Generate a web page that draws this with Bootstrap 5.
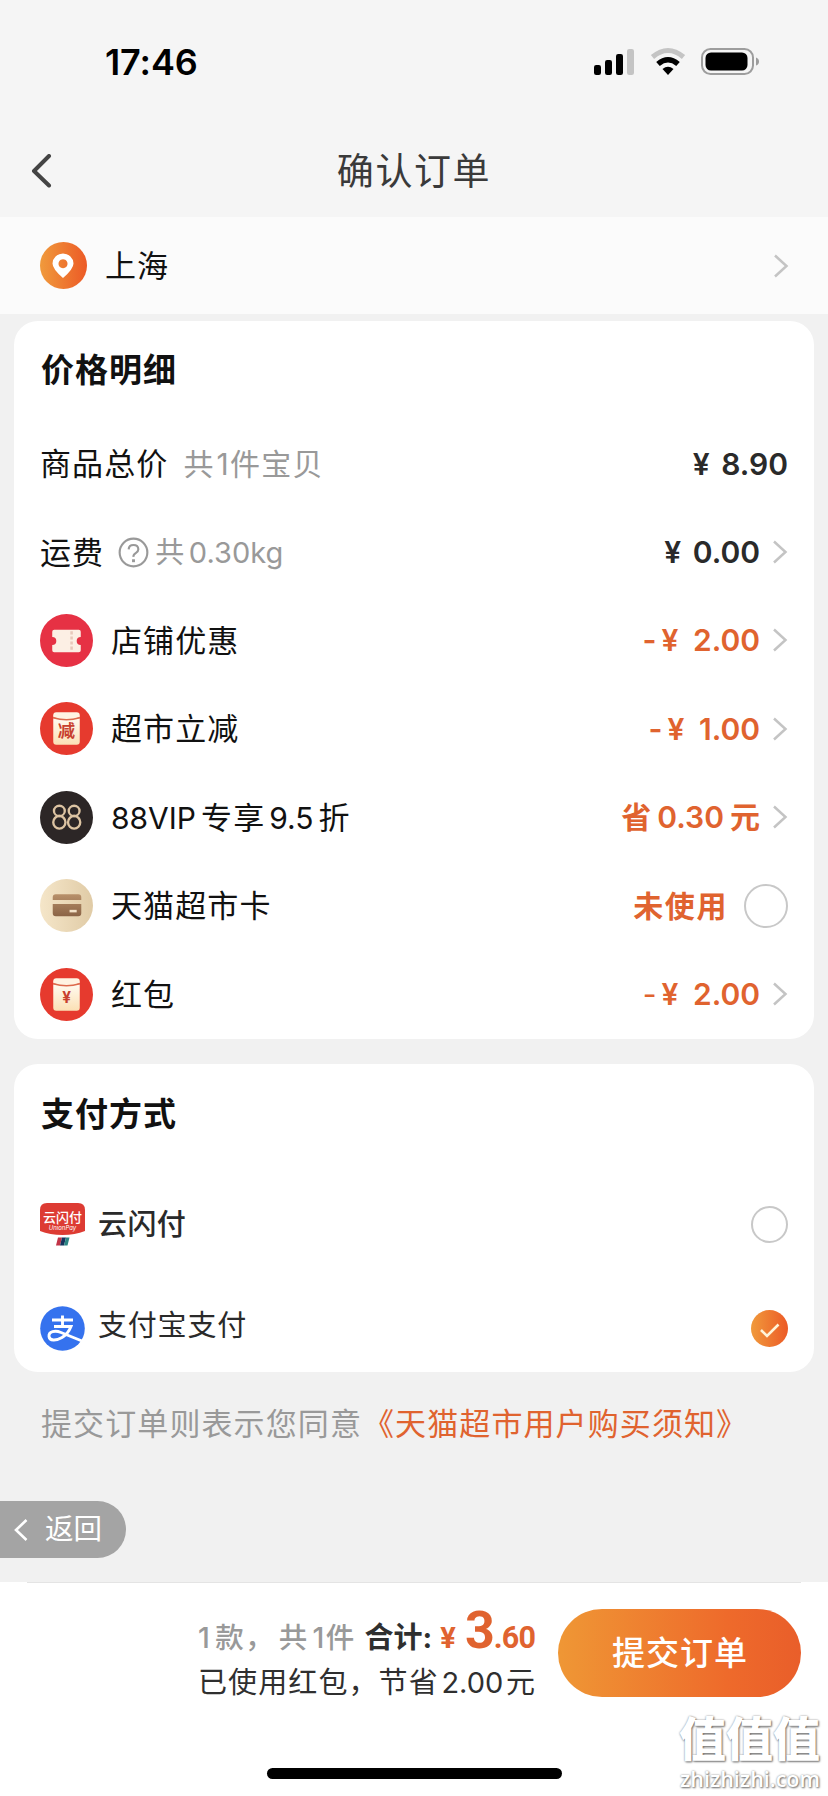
<!DOCTYPE html>
<html lang="zh-CN">
<head>
<meta charset="utf-8">
<meta name="viewport" content="width=device-width, initial-scale=1">
<title>确认订单</title>
<link rel="stylesheet" href="https://cdn.jsdelivr.net/npm/bootstrap@5.3.0/dist/css/bootstrap.min.css">
<style>
  body { font-family: Inter, "Noto Sans CJK SC", sans-serif; background: #f1f1f1; color: #111; width: 828px; height: 1796px; overflow: hidden; font-size: 31px; line-height: 1; white-space: nowrap; position: relative; }
  svg { display: block; flex: none; }
  .topbar { background: #f5f5f5; height: 217px; }
  .status { height: 124px; padding-left: 105px; padding-right: 69px; }
  .clock { font-size: 36px; font-weight: 600; color: #000; letter-spacing: -.1px; }
  .page-head { height: 93px; padding-top: 2px; }
  .back-arrow { left: 29px; top: 30px; }
  .page-name { font-size: 37px; letter-spacing: 1.6px; color: #3a3a3a; }
  .address { height: 97px; background: #fbfbfb; padding: 0 39px 0 40px; }
  .panel { margin: 0 14px; background: #fff; border-radius: 24px; padding: 0 26px; }
  .price-panel { margin-top: 7px; height: 718px; }
  .pay-panel { margin-top: 25px; height: 308px; }
  .panel-title { height: 98.5px; font-size: 33px; font-weight: 700; letter-spacing: 1px; margin: 0; padding: 1px 0 0 1px; }
  .pay-panel .panel-title { height: 101px; }
  .line { height: 88.4px; }
  .cn { letter-spacing: 1.1px; }
  .tag { margin-left: 18px; }
  .note { margin-left: 15px; font-size: 30px; letter-spacing: 1.2px; }
  .note-num { padding-left: 2px; }
  .help { margin-left: 14px; }
  .weight { margin-left: 6px; font-size: 29px; word-spacing: -3.5px; }
  .soft { color: #999; }
  .money { font-weight: 600; font-size: 30px; color: #2a2a2a; }
  .yen { margin-right: 4px; }
  .minus + .yen { margin-right: 7px; }
  .minus { margin-right: 5px; }
  .num { margin: 0 6px; }
  .latin { font-size: 30px; }
  .vip-mid { margin-left: 5px; }
  .vip-num { font-size: 30px; margin: 0 5px 0 4px; }
  .go { margin-left: 12px; }
  .orange { color: #e0632f; }
  .ring { border: 2px solid #c8c8c8; border-radius: 50%; }
  .ring-lg { width: 44px; height: 44px; }
  .ring-sm { width: 37px; height: 37px; }
  .unused { letter-spacing: 1.6px; }
  .pay-row-a { height: 117px; padding-top: 2px; }
  .pay-row-b { height: 91px; padding-top: 2px; }
  .pay-name { font-size: 29px; margin-left: 13px; color: #2a2a2a; letter-spacing: .4px; }
  .pay-name-plain { letter-spacing: .8px; padding-bottom: 6px; }
  .terms { height: 102px; padding-left: 41px; letter-spacing: 1.1px; font-size: 31px; }
  .terms-link { margin-left: 1px; }
  .back-pill { width: 126px; height: 57px; margin-top: 27px; background: #a4a4a4; border-radius: 0 29px 29px 0; color: #fff; font-size: 28.5px; padding-left: 14px; }
  .back-text { margin-left: 17px; }
  .footer-bar { margin-top: 24px; height: 215px; background: #fff; padding: 0 27px; position: relative; }
  .hairline { height: 1px; background: #e4e4e4; }
  .sums { margin-right: 23px; margin-top: 25px; width: 337px; color: #2f2f2f; font-size: 29px; }
  .sum-line { height: 51px; line-height: 45px; align-items: baseline; }
  .sum-sub { padding-top: 1px; }
  .count { font-weight: 500; font-size: 28.5px; letter-spacing: 1.3px; }
  .sum-label { margin-left: 9px; }
  .price { font-family: Roboto, sans-serif; font-weight: 700; }
  .price-int { font-size: 52px; letter-spacing: -1px; }
  .price-dec { font-size: 30.5px; letter-spacing: -.9px; }
  .submit { width: 243px; height: 88px; margin-top: 26px; border-radius: 44px; background: linear-gradient(90deg, #ef9735, #ee6a2b 70%, #e95e2a); color: #fff; font-size: 33px; font-weight: 500; letter-spacing: 1px; border: 0; padding: 0 0 0 1px; }
  .home-line { width: 295px; height: 11px; border-radius: 6px; background: #000; position: absolute; left: 267px; top: 186px; }
  .site-mark { position: absolute; right: 8px; top: 129px; color: #fff; text-shadow: 1px 1px 2px #707070, 0 0 2px #909090; text-align: right; }
  .mark-cn { font-size: 47px; font-weight: 900; height: 57px; line-height: 55px; }
  .mark-url { font-family: "Open Sans", sans-serif; font-size: 21.5px; font-weight: 600; height: 26px; line-height: 22px; }
</style>
</head>
<body>
<svg width="0" height="0" class="position-absolute">
  <defs>
    <linearGradient id="og"><stop offset="0" stop-color="#f09a3c"/><stop offset="1" stop-color="#ec5a26"/></linearGradient>
    <linearGradient id="cream" x2="0" y2="1"><stop offset="0" stop-color="#fffaf0"/><stop offset="1" stop-color="#fbe0b4"/></linearGradient>
    <linearGradient id="tan"><stop offset="0" stop-color="#f5e6c9"/><stop offset="1" stop-color="#e0cba6"/></linearGradient>
    <linearGradient id="brown" x2="0" y2="1"><stop offset="0" stop-color="#b8906a"/><stop offset="1" stop-color="#8b6446"/></linearGradient>
    <symbol id="chev" viewBox="0 0 16 24"><path d="M2 1.500L13.500 12 2 22.500" fill="none" stroke="#c4c4c4" stroke-width="2.500"/></symbol>
    <symbol id="packet" viewBox="0 0 52 52"><circle cx="26" cy="26" r="26" fill="#e63a2e"/><path d="M13 16h26v23q0 3-3 3H16q-3 0-3-3z" fill="url(#cream)"/><path d="M13 13q0-3 3-3h20q3 0 3 3v2q-13 4-26 0z" fill="#fff3e2"/><path d="M13 15.500q13 4 26 0" fill="none" stroke="#dc6a4c" stroke-width="1.400"/></symbol>
  </defs>
</svg>

<header class="topbar">
  <div class="status d-flex align-items-center justify-content-between">
    <span class="clock">17:46</span>
    <svg width="166" height="30" viewBox="0 0 166 30">
      <rect x="1" y="18" width="7" height="10" rx="2.200"/><rect x="12" y="13" width="7" height="15" rx="2.200"/><rect x="23" y="7" width="7" height="21" rx="2.200"/><rect x="34" y="2" width="7" height="26" rx="2.200" fill="#c4c4c4"/>
      <path d="M59.500 10Q75 -3 90.500 10" fill="none" stroke="#c4c4c4" stroke-width="5"/>
      <path d="M65 17Q75 8.500 85 17" fill="none" stroke="#000" stroke-width="5.500"/>
      <path d="M75 28l-5.500-6q5.500-4.500 11 0z"/>
      <rect x="109" y="2" width="51" height="25" rx="8.500" fill="none" stroke="#9d9d9d" stroke-width="2"/><rect x="112.500" y="5.500" width="42" height="18" rx="5.500"/><path d="M163 10.500q3 1 3 4t-3 4z" fill="#9d9d9d"/>
    </svg>
  </div>
  <div class="page-head d-flex align-items-center justify-content-center position-relative">
    <svg class="position-absolute back-arrow" width="24" height="34" viewBox="0 0 24 34"><path d="M20 2L5 17l15 14.500" fill="none" stroke="#444" stroke-width="4" stroke-linejoin="round" stroke-linecap="round"/></svg>
    <span class="page-name">确认订单</span>
  </div>
</header>

<section class="address d-flex align-items-center">
  <svg width="47" height="47" viewBox="0 0 47 47"><circle cx="23.500" cy="23.500" r="23.500" fill="url(#og)"/><path fill-rule="evenodd" d="M23 36Q12.500 27 12.500 21.500a10.500 10 0 0 1 21 0Q33.500 27 23 36zM23 17.200a4.500 4.500 0 1 0 .01 0z" fill="#fff"/></svg>
  <span class="cn tag me-auto">上海</span>
  <svg width="16" height="24"><use href="#chev"/></svg>
</section>

<main>
  <section class="panel price-panel">
    <h2 class="panel-title d-flex align-items-center">价格明细</h2>
    <div class="line d-flex align-items-center"><span class="cn">商品总价</span><span class="note soft me-auto">共<span class="note-num">1</span>件宝贝</span><span class="money"><span class="yen">¥</span> 8.90</span></div>
    <div class="line d-flex align-items-center"><span class="cn">运费</span>
      <svg class="help" width="31" height="31" viewBox="0 0 32 32" fill="none" stroke="#999" stroke-width="2.200"><circle cx="16" cy="16" r="14.300"/><path d="M11 12.800Q11.200 8.200 16 8.200T21 12.600Q21 15 18.300 16.600T16 20.500"/><path d="M16 23v3" stroke-width="3"/></svg>
      <span class="soft weight me-auto">共 0.30kg</span><span class="money"><span class="yen">¥</span> 0.00</span><svg class="go" width="16" height="24"><use href="#chev"/></svg></div>
    <div class="line d-flex align-items-center">
      <svg width="53" height="53" viewBox="0 0 52 52"><circle cx="26" cy="26" r="26" fill="#e63144"/><path d="M14 15.500h24q2 0 2 2v5a4 4 0 0 0 0 8v5q0 2-2 2H14q-2 0-2-2v-5a4 4 0 0 0 0-8v-5q0-2 2-2z" fill="#fcefe4"/><path d="M31 17v20" stroke="#e8c8ba" stroke-width="2.500" stroke-dasharray="3 2"/></svg>
      <span class="cn tag me-auto">店铺优惠</span><span class="money orange"><span class="minus">-</span><span class="yen">¥</span> 2.00</span><svg class="go" width="16" height="24"><use href="#chev"/></svg></div>
    <div class="line d-flex align-items-center">
      <svg width="53" height="53" viewBox="0 0 52 52"><use href="#packet"/><text x="26" y="34.500" font-size="17" font-weight="700" fill="#c8402e" text-anchor="middle">减</text></svg>
      <span class="cn tag me-auto">超市立减</span><span class="money orange"><span class="minus">-</span><span class="yen">¥</span> 1.00</span><svg class="go" width="16" height="24"><use href="#chev"/></svg></div>
    <div class="line d-flex align-items-center">
      <svg width="53" height="53" viewBox="0 0 52 52"><circle cx="26" cy="26" r="26" fill="#2c2626"/><g fill="none" stroke="#dcc3a2" stroke-width="2.300"><ellipse cx="19" cy="19.500" rx="5.300" ry="5"/><ellipse cx="19" cy="30.700" rx="6" ry="6.200"/><ellipse cx="33.500" cy="19.500" rx="5.300" ry="5"/><ellipse cx="33.500" cy="30.700" rx="6" ry="6.200"/></g></svg>
      <span class="tag me-auto"><span class="latin">88VIP</span><span class="cn vip-mid">专享</span><span class="vip-num">9.5</span>折</span><span class="money orange">省<span class="num">0.30</span>元</span><svg class="go" width="16" height="24"><use href="#chev"/></svg></div>
    <div class="line d-flex align-items-center">
      <svg width="53" height="53" viewBox="0 0 52 52"><circle cx="26" cy="26" r="26" fill="url(#tan)"/><path d="M12.500 20.500v-2.500q0-3 3-3h22q3 0 3 3v2.500zM12.500 24.500h28v9q0 3-3 3h-22q-3 0-3-3z" fill="url(#brown)"/><path d="M29 31.500h7" stroke="#f3e2c8" stroke-width="2.500"/></svg>
      <span class="cn tag me-auto">天猫超市卡</span><span class="money orange unused">未使用</span><span class="ring ring-lg ms-3"></span></div>
    <div class="line d-flex align-items-center">
      <svg width="53" height="53" viewBox="0 0 52 52"><use href="#packet"/><text x="26" y="34" font-size="15" font-weight="700" fill="#c8402e" text-anchor="middle">¥</text></svg>
      <span class="cn tag me-auto">红包</span><span class="money orange"><span class="minus fw-normal">-</span><span class="yen">¥</span> 2.00</span><svg class="go" width="16" height="24"><use href="#chev"/></svg></div>
  </section>

  <section class="panel pay-panel">
    <h2 class="panel-title d-flex align-items-center">支付方式</h2>
    <div class="pay-row-a d-flex align-items-center">
      <svg width="45" height="44" viewBox="0 0 45 44"><path d="M7 0h31q7 0 7 7v21q-10 4-22.500 4T0 28V7q0-7 7-7z" fill="#dd3b33"/><text x="22.500" y="18.500" font-size="13" fill="#fff" font-weight="500" text-anchor="middle">云闪付</text><text x="22.500" y="27" font-size="6" fill="#fff" font-style="italic" text-anchor="middle">UnionPay</text><path d="M18 34.500h4l-2 8h-4z" fill="#c23447"/><path d="M22 34.500h4l-2 8h-4z" fill="#17335c"/><path d="M26 34.500h3.500l-2 8h-3.500z" fill="#2b8583"/></svg>
      <span class="pay-name me-auto fw-medium">云闪付</span><span class="ring ring-sm"></span></div>
    <div class="pay-row-b d-flex align-items-center">
      <svg width="45" height="45" viewBox="0 0 45 45"><circle cx="22.500" cy="22.500" r="22.300" fill="#3572ee"/><path d="M12 14h21M22.500 9.500v11M14 20.500h17Q28 28 22 31.500C16 35 9.500 35 9 30.500 8.500 25.500 15 24 21 26.500L42 35" fill="none" stroke="#fff" stroke-width="2.900"/></svg>
      <span class="pay-name pay-name-plain me-auto">支付宝支付</span>
      <svg width="37" height="37" viewBox="0 0 37 37"><circle cx="18.500" cy="18.500" r="18.500" fill="url(#og)"/><path d="M10 20l6 6 11.500-11.500" fill="none" stroke="#fff4d8" stroke-width="2.600"/></svg></div>
  </section>

  <p class="terms d-flex align-items-center mb-0"><span class="soft">提交订单则表示您同意</span><span class="orange terms-link">《天猫超市用户购买须知》</span></p>
  <div class="back-pill d-flex align-items-center"><svg width="14" height="22" viewBox="0 0 14 22"><path d="M12.500 1L2 11l10.500 10" fill="none" stroke="#fff" stroke-width="2.600"/></svg><span class="back-text">返回</span></div>
</main>

<footer class="footer-bar">
  <div class="hairline"></div>
  <div class="d-flex justify-content-end">
    <div class="sums">
      <div class="sum-line d-flex"><span class="soft count">1<span class="ps-1">款，</span><span class="ps-1">共</span><span class="ps-1">1</span>件</span><b class="sum-label">合计:</b><span class="price orange ms-2">¥</span><span class="price orange ms-auto"><span class="price-int">3</span><span class="price-dec">.60</span></span></div>
      <div class="sum-line sum-sub d-flex justify-content-between"><span class="cn">已使用红包，节省</span><span>2.00</span><span>元</span></div>
    </div>
    <button class="submit">提交订单</button>
  </div>
  <div class="home-line"></div>
  <div class="site-mark"><div class="mark-cn">值值值</div><div class="mark-url">zhizhizhi.com</div></div>
</footer>
<script src="https://cdn.jsdelivr.net/npm/bootstrap@5.3.0/dist/js/bootstrap.bundle.min.js"></script>
</body>
</html>
